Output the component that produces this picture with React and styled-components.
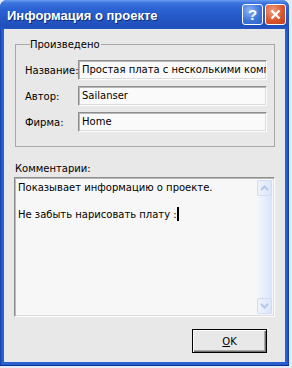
import React from "react";
import styled, { createGlobalStyle } from "styled-components";

const GlobalStyle = createGlobalStyle`
  body {
    margin: 0;
    background: #e4ecf8;
    font-family: "DejaVu Sans", Tahoma, sans-serif;
  }
`;

const Window = styled.div`
  width: 289px;
  height: 366px;
  box-sizing: border-box;
  display: flex;
  flex-direction: column;
  background: linear-gradient(90deg, #0b3ea8 0, #2a5fd0 2px, #2a5fd0 calc(100% - 2px), #0b3ea8 100%);
  border-radius: 7px 7px 0 0;
  padding: 0 4px 3px 4px;
  border-bottom: 1px solid #0a2f90;
`;

const TitleBar = styled.div`
  height: 29px;
  margin: 0 -4px;
  padding: 0 3px 0 7px;
  display: flex;
  align-items: center;
  border-radius: 7px 7px 0 0;
  background: linear-gradient(180deg, #6b9cf0 0, #3b74de 3px, #2a60d0 10px, #2456c4 20px, #1f4fba 26px, #2355c0 29px);
`;

const Title = styled.div`
  flex: 1;
  color: #fff;
  font-family: "Liberation Sans", Arial, sans-serif;
  font-weight: bold;
  font-size: 13px;
  text-shadow: 1px 1px #0c2a78;
  padding-top: 1px;
`;

const CaptionButton = styled.div`
  width: 21px;
  height: 21px;
  box-sizing: border-box;
  margin-left: 2px;
  border: 1px solid #fff;
  border-radius: 3px;
  display: flex;
  align-items: center;
  justify-content: center;
  color: #fff;
  font-family: "Liberation Sans", Arial, sans-serif;
  font-weight: bold;
  font-size: 15px;
  background: ${(p) =>
    p.$close
      ? "radial-gradient(circle at 35% 30%, #f0a080 0, #d9572e 55%, #c0401c 100%)"
      : "radial-gradient(circle at 35% 30%, #8fb4f2 0, #3f77dc 55%, #2c5fc8 100%)"};
`;

const Body = styled.div`
  flex: 1;
  background: #e8e8e8;
  display: flex;
  flex-direction: column;
  padding: 10px 10px 0 10px;
`;

const Group = styled.fieldset`
  margin: 0 9px 0 1px;
  padding: 10px 7px 14px 9px;
  border: 1px solid #a8a8a8;
  border-radius: 0;
  display: flex;
  flex-direction: column;
  gap: 6px;
`;

const Legend = styled.legend`
  padding: 0 1px 0 0;
  margin-left: 5px;
  font-size: 10px;
  color: #000;
`;

const Row = styled.div`
  display: flex;
  align-items: center;
`;

const Label = styled.div`
  width: 53px;
  font-size: 10px;
  color: #000;
`;

const Field = styled.div`
  width: 189px;
  height: 20px;
  box-sizing: border-box;
  background: #fafafa;
  border-top: 1px solid #8e8e8e;
  border-left: 1px solid #8e8e8e;
  border-right: 1px solid #fdfdfd;
  border-bottom: 1px solid #fdfdfd;
  box-shadow: inset 1px 1px #b8b8b8, inset -1px -1px #dcdcdc;
  font-size: 10px;
  line-height: 18px;
  padding-left: 3px;
  white-space: nowrap;
  overflow: hidden;
  color: #000;
`;

const CommentLabel = styled.div`
  margin: 16px 0 3px 1px;
  font-size: 10px;
  color: #000;
`;

const Memo = styled.div`
  height: 140px;
  width: 261px;
  box-sizing: border-box;
  display: flex;
  background: #f7f7f7;
  border-top: 1px solid #8e8e8e;
  border-left: 1px solid #8e8e8e;
  border-right: 1px solid #fdfdfd;
  border-bottom: 1px solid #fdfdfd;
  box-shadow: inset 1px 1px #b8b8b8, inset -1px -1px #dcdcdc;
  padding: 2px;
`;

const MemoText = styled.div`
  flex: 1;
  font-size: 10px;
  line-height: 12.5px;
  padding: 2px 1px;
  color: #000;
  p {
    margin: 0 0 12.5px 0;
  }
`;

const Caret = styled.span`
  display: inline-block;
  width: 2px;
  height: 14px;
  background: #000;
  vertical-align: -3px;
`;

const ScrollBar = styled.div`
  width: 15px;
  display: flex;
  flex-direction: column;
  justify-content: space-between;
  background: linear-gradient(90deg, #f4f8fe 0, #e3edfb 60%, #d8e5f8 100%);
`;

const ScrollButton = styled.div`
  height: 16px;
  box-sizing: border-box;
  border: 1px solid #cfdcf4;
  border-radius: 2px;
  background: linear-gradient(90deg, #eef4fe 0, #dbe6f9 100%);
  display: flex;
  align-items: center;
  justify-content: center;
`;

const Footer = styled.div`
  display: flex;
  justify-content: flex-end;
  padding: 12px 8px 0 0;
`;

const OkButton = styled.div`
  width: 75px;
  height: 24px;
  box-sizing: border-box;
  border: 1px solid #000;
  background: #e8e8e8;
  box-shadow: inset 1px 1px #fff, inset -1px -1px #6e6e6e, inset -2px -2px #a8a8a8;
  display: flex;
  align-items: center;
  justify-content: center;
  font-size: 10px;
  color: #000;
  u {
    text-decoration: underline;
  }
`;

const Chevron = ({ up }) => (
  <svg width="9" height="6" viewBox="0 0 9 6">
    <path
      d={up ? "M1 5 L4.5 1.5 L8 5" : "M1 1 L4.5 4.5 L8 1"}
      fill="none"
      stroke="#b4c6e8"
      strokeWidth="2"
    />
  </svg>
);

export default function App() {
  return (
    <>
      <GlobalStyle />
      <Window>
        <TitleBar>
          <Title>Информация о проекте</Title>
          <CaptionButton>?</CaptionButton>
          <CaptionButton $close>
            <svg width="11" height="11" viewBox="0 0 11 11">
              <path d="M1.5 1.5 L9.5 9.5 M9.5 1.5 L1.5 9.5" stroke="#fff" strokeWidth="2.2" />
            </svg>
          </CaptionButton>
        </TitleBar>
        <Body>
          <Group>
            <Legend>Произведено</Legend>
            <Row>
              <Label>Название:</Label>
              <Field>Простая плата с несколькими компонентами</Field>
            </Row>
            <Row>
              <Label>Автор:</Label>
              <Field>Sailanser</Field>
            </Row>
            <Row>
              <Label>Фирма:</Label>
              <Field>Home</Field>
            </Row>
          </Group>
          <CommentLabel>Комментарии:</CommentLabel>
          <Memo>
            <MemoText>
              <p>Показывает информацию о проекте.</p>
              <p>
                Не забыть нарисовать плату :<Caret />
              </p>
            </MemoText>
            <ScrollBar>
              <ScrollButton>
                <Chevron up />
              </ScrollButton>
              <ScrollButton>
                <Chevron />
              </ScrollButton>
            </ScrollBar>
          </Memo>
          <Footer>
            <OkButton>
              <span>
                <u>O</u>K
              </span>
            </OkButton>
          </Footer>
        </Body>
      </Window>
    </>
  );
}
